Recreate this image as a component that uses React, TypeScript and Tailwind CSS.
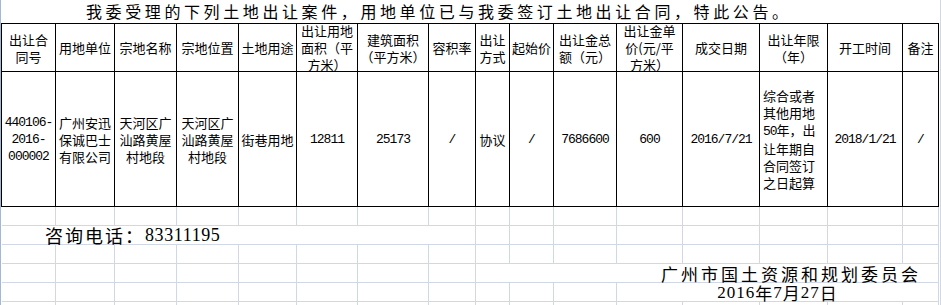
import type { ReactNode } from "react";

const cols =
  "grid grid-cols-[54px_59px_62px_62px_58px_61px_71px_47px_34px_44px_63px_66px_77px_68px_75px_36px]";

function N({ children }: { children: ReactNode }) {
  return <span className="font-['Liberation_Mono',monospace] tracking-[-1px]">{children}</span>;
}

function Cell({ children, className = "" }: { children?: ReactNode; className?: string }) {
  return (
    <div
      className={`flex items-center justify-center text-center leading-[17px] border-r border-b border-black ${className}`}
    >
      {children}
    </div>
  );
}

function G({ className = "", children }: { className?: string; children?: ReactNode }) {
  return <div className={`border-r border-b border-[#d0d7e5] ${className}`}>{children}</div>;
}

const headers: ReactNode[] = [
  <>出让合<br />同号</>,
  "用地单位",
  "宗地名称",
  "宗地位置",
  "土地用途",
  <>出让用地<br />面积（平<br />方米）</>,
  <>建筑面积<br />（平方米）</>,
  "容积率",
  <>出让<br />方式</>,
  "起始价",
  <>出让金总<br />额（元）</>,
  <>出让金单<br />价(元/平<br />方米）</>,
  "成交日期",
  <>出让年限<br />（年）</>,
  "开工时间",
  "备注",
];

export default function App() {
  return (
    <div className="w-[941px] h-[305px] overflow-hidden bg-white flex text-black font-['Noto_Sans_CJK_SC',sans-serif] text-[13px]">
      <div className="w-px bg-[#a3b8d4]" />
      <div className="flex-1 border-r border-[#d0d7e5]">
        <div className="h-[23px] pl-[85px] text-[16px] leading-[23px] tracking-[3.6px] whitespace-nowrap">
          我委受理的下列土地出让案件，用地单位已与我委签订土地出让合同，特此公告。
        </div>

        <div className={`${cols} grid-rows-[48px_135px] w-[938px] border-l border-t border-black`}>
          {headers.map((h, i) => (
            <Cell key={i}>{h}</Cell>
          ))}

          <Cell><N>440106-<br />2016-<br />000002</N></Cell>
          <Cell>广州安迅<br />保诚巴士<br />有限公司</Cell>
          <Cell>天河区广<br />汕路黄屋<br />村地段</Cell>
          <Cell>天河区广<br />汕路黄屋<br />村地段</Cell>
          <Cell>街巷用地</Cell>
          <Cell><N>12811</N></Cell>
          <Cell><N>25173</N></Cell>
          <Cell><N>/</N></Cell>
          <Cell>协议</Cell>
          <Cell><N>/</N></Cell>
          <Cell><N>7686600</N></Cell>
          <Cell><N>600</N></Cell>
          <Cell><N>2016/7/21</N></Cell>
          <Cell className="!justify-start !text-left pl-[3px]">
            <div>
              综合或者<br />其他用地<br /><N>50</N>年，出<br />让年期自<br />合同签订<br />之日起算
            </div>
          </Cell>
          <Cell><N>2018/1/21</N></Cell>
          <Cell><N>/</N></Cell>
        </div>

        <div className={`${cols} grid-rows-[19px_19px_19px_19px_19px_19px] pl-px w-[939px]`}>
          {Array.from({ length: 16 }, (_, i) => <G key={`a${i}`} />)}

          <G className="col-span-8 flex items-center pl-[43px] whitespace-nowrap text-[18px] leading-[19px]">
            <span className="tracking-[2px]">咨询电话：</span>
            <span className="font-['Liberation_Serif',serif] tracking-[0.6px]">83311195</span>
          </G>
          {Array.from({ length: 8 }, (_, i) => <G key={`b${i}`} />)}

          {Array.from({ length: 16 }, (_, i) => <G key={`c${i}`} />)}

          {Array.from({ length: 8 }, (_, i) => <G key={`d${i}`} />)}
          <G className="col-span-8 flex items-center justify-end pr-[17px] whitespace-nowrap text-[17px] leading-[19px] tracking-[3px]">
            广州市国土资源和规划委员会
          </G>

          {Array.from({ length: 11 }, (_, i) => <G key={`e${i}`} />)}
          <G className="col-span-5 flex items-center justify-center whitespace-nowrap text-[17px] leading-[19px] tracking-[1px]">
            <span className="font-['Liberation_Serif',serif]">2016</span>年
            <span className="font-['Liberation_Serif',serif]">7</span>月
            <span className="font-['Liberation_Serif',serif]">27</span>日
          </G>

          {Array.from({ length: 16 }, (_, i) => <G key={`f${i}`} />)}
        </div>
      </div>
    </div>
  );
}
